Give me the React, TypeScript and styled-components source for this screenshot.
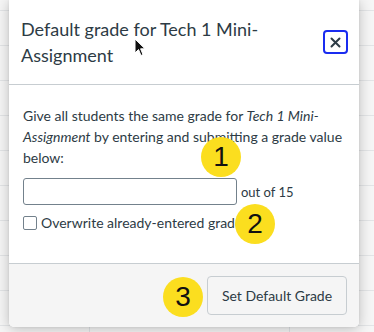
import React from 'react';
import styled, { createGlobalStyle } from 'styled-components';

const GlobalStyle = createGlobalStyle`
   html, body {
      margin: 0;
      padding: 0;
   }
   body {
      width: 374px;
      height: 332px;
      overflow: hidden;
      font-family: Lato, "Noto Sans", sans-serif;
      background-color: #f6f6f6;
      background-image:
         linear-gradient(to right, transparent 89px, #dfe3e6 89px, #dfe3e6 90px, transparent 90px, transparent 289px, #dfe3e6 289px, #dfe3e6 290px, transparent 290px),
         repeating-linear-gradient(to bottom, transparent 0px, transparent 10px, #e3e5e7 10px, #e3e5e7 11px, transparent 11px, transparent 35px);
      background-size: 374px 332px, 374px 35px;
      background-repeat: no-repeat, repeat;
   }
`;

const Stage = styled.div`
   position: relative;
   width: 374px;
   height: 332px;
`;

const Modal = styled.div`
   position: relative;
   margin-left: 9px;
   width: 350px;
   height: 327px;
   background: #fff;
   border-radius: 0 0 5px 5px;
   box-shadow: 0 2px 14px rgba(0, 0, 0, 0.24), 0 0 3px rgba(0, 0, 0, 0.08);
   display: flex;
   flex-direction: column;
   color: #2d3b45;
`;

const Header = styled.div`
   display: flex;
   align-items: center;
   gap: 12px;
   height: 85px;
   box-sizing: border-box;
   padding: 0 11px 0 12px;
   border-bottom: 1px solid #c7cdd1;
`;

const Title = styled.h2`
   flex: 1;
   margin: 0;
   font-size: 18px;
   font-weight: 400;
   line-height: 26px;
   color: #2d3b45;
`;

const CloseButton = styled.button`
   width: 25px;
   height: 24px;
   padding: 0;
   display: flex;
   align-items: center;
   justify-content: center;
   background: #fff;
   border: 2px solid #1a2cf0;
   border-radius: 4px;
   color: #2d3b45;
`;

const Body = styled.div`
   flex: 1;
   padding: 20px 14px 0 14px;
   font-size: 14px;
`;

const Intro = styled.p`
   margin: 0 0 10px 0;
   line-height: 21px;
`;

const InputRow = styled.div`
   display: flex;
   align-items: center;
   gap: 4px;
`;

const GradeInput = styled.input`
   width: 214px;
   height: 27px;
   box-sizing: border-box;
   border: 1px solid #73818c;
   border-radius: 3px;
   background: #fff;
`;

const OutOf = styled.span`
   font-size: 13px;
   color: #2d3b45;
`;

const CheckRow = styled.label`
   display: flex;
   align-items: center;
   gap: 4px;
   margin-top: 9px;
   font-size: 14px;
   white-space: nowrap;
`;

const Box = styled.span`
   width: 12px;
   height: 12px;
   border: 1px solid #73818c;
   border-radius: 2px;
   background: #fff;
`;

const Footer = styled.div`
   display: flex;
   justify-content: flex-end;
   align-items: center;
   height: 64px;
   box-sizing: border-box;
   padding: 0 12px;
   background: #f5f5f5;
   border-top: 1px solid #c7cdd1;
   border-radius: 0 0 5px 5px;
`;

const SubmitButton = styled.button`
   width: 140px;
   height: 39px;
   background: #f5f5f5;
   border: 1px solid #c7cdd1;
   border-radius: 4px;
   font-family: Lato, "Noto Sans", sans-serif;
   font-size: 14px;
   color: #2d3b45;
`;

const Marker = styled.div<{ $x: number; $y: number }>`
   position: absolute;
   left: ${p => p.$x - 20}px;
   top: ${p => p.$y - 20}px;
   width: 40px;
   height: 40px;
   border-radius: 50%;
   background: #fbde1f;
   display: flex;
   align-items: center;
   justify-content: center;
   font-family: "Liberation Sans", Arial, sans-serif;
   font-size: 28px;
   color: #111;
`;

const Cursor = styled.svg`
   position: absolute;
   left: 134px;
   top: 38px;
`;

export default function App() {
   return (
      <>
         <GlobalStyle />
         <Stage>
            <Modal>
               <Header>
                  <Title>Default grade for Tech 1 Mini-Assignment</Title>
                  <CloseButton aria-label="Close">
                     <svg width="11" height="11" viewBox="0 0 11 11">
                        <path d="M1.5 1.5 L9.5 9.5 M9.5 1.5 L1.5 9.5" stroke="#2d3b45" strokeWidth="2" strokeLinecap="round" />
                     </svg>
                  </CloseButton>
               </Header>
               <Body>
                  <Intro>
                     Give all students the same grade for <i>Tech 1 Mini-Assignment</i> by entering and submitting a grade value below:
                  </Intro>
                  <InputRow>
                     <GradeInput type="text" />
                     <OutOf>out of 15</OutOf>
                  </InputRow>
                  <CheckRow>
                     <Box />
                     Overwrite already-entered grades
                  </CheckRow>
               </Body>
               <Footer>
                  <SubmitButton>Set Default Grade</SubmitButton>
               </Footer>
            </Modal>
            <Marker $x={221} $y={157}>1</Marker>
            <Marker $x={255} $y={224}>2</Marker>
            <Marker $x={183} $y={297}>3</Marker>
            <Cursor width="12" height="19" viewBox="0 0 12 19">
               <path d="M1 1 L1 15 L4.5 11.5 L7 17.5 L9 16.6 L6.6 10.8 L11 10.8 Z" fill="#111" stroke="#fff" strokeWidth="1" />
            </Cursor>
         </Stage>
      </>
   );
}
